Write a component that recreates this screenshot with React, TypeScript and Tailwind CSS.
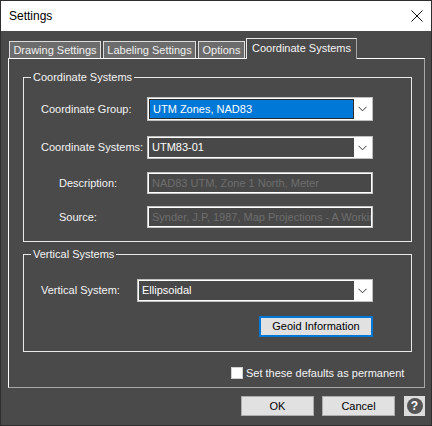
import React from "react";

const font = { fontFamily: '"Liberation Sans", Arial, sans-serif' };

function Chevron() {
  return (
    <svg width="9" height="6" viewBox="0 0 9 6" className="block">
      <path d="M0.5 0.8 L4.5 4.8 L8.5 0.8" fill="none" stroke="#333" strokeWidth="1" />
    </svg>
  );
}

function Combo({ value, selected, w, h }: { value: string; selected?: boolean; w: string; h: string }) {
  return (
    <div className={`${w} ${h} border border-[#c0c0c0] bg-white flex p-[1px]`}>
      <div
        className={`flex-1 flex items-center pl-[3px] text-[11px] text-white ${
          selected ? "bg-[#0078d7] border border-[#2a2a2a]" : "bg-[#484848]"
        }`}
      >
        {value}
      </div>
      <div className="w-[17px] flex items-center justify-center">
        <Chevron />
      </div>
    </div>
  );
}

function TextBox({ value }: { value: string }) {
  return (
    <div className="w-[226px] h-[22px] border border-[#c8c8c8] p-[1px] bg-white">
      <div className="h-full bg-[#484848] flex items-center pl-[3px] text-[11px] text-[#6e6e6e] whitespace-nowrap overflow-hidden">
        {value}
      </div>
    </div>
  );
}

function Group({ title, className, children }: { title: string; className: string; children: React.ReactNode }) {
  return (
    <div className={`relative border border-[#e8e8e8] ${className}`}>
      <span className="absolute -top-[8px] left-[7px] px-[2px] bg-[#4a4a4a] text-[11px] leading-[14px] text-[#f4f4f4]">
        {title}
      </span>
      {children}
    </div>
  );
}

export default function App() {
  return (
    <div style={font} className="w-[432px] h-[426px] bg-[#4a4a4a] border border-[#2e2e2e] flex flex-col text-[#f4f4f4] overflow-hidden">
      {/* Title bar */}
      <div className="h-[30px] bg-white flex items-center justify-between pl-[8px] pr-[8px] shrink-0">
        <span className="text-[12px] text-black">Settings</span>
        <svg width="12" height="12" viewBox="0 0 12 12">
          <path d="M0.5 0.5 L11.5 11.5 M11.5 0.5 L0.5 11.5" stroke="#111" strokeWidth="1" />
        </svg>
      </div>

      {/* Tabs */}
      <div className="flex items-end h-[20px] mt-[7px] pl-[8px] text-[11px] relative z-10">
        <div className="w-[92px] h-[17px] bg-[#6c6c6c] border border-b-0 border-[#dcdcdc] flex items-center justify-center text-[#f0f0f0]">
          Drawing Settings
        </div>
        <div className="ml-[2px] w-[93px] h-[17px] bg-[#6c6c6c] border border-b-0 border-[#dcdcdc] flex items-center justify-center text-[#f0f0f0]">
          Labeling Settings
        </div>
        <div className="ml-[2px] w-[47px] h-[17px] bg-[#6c6c6c] border border-b-0 border-[#dcdcdc] flex items-center justify-center text-[#f0f0f0]">
          Options
        </div>
        <div className="ml-[1px] w-[111px] h-[21px] -mb-[1px] bg-[#4a4a4a] border border-b-0 border-[#e8e8e8] border-r-[#a8a8a8] flex items-center justify-center text-[#f4f4f4] pb-[2px]">
          Coordinate Systems
        </div>
      </div>

      {/* Panel */}
      <div className="ml-[7px] w-[417px] h-[330px] border border-white border-r-[#a8a8a8] border-b-[#a8a8a8] text-[11px]">
        <div className="pl-[14px] pt-[18px]">
          <Group title="Coordinate Systems" className="w-[389px] h-[165px]">
            <div className="pl-[17px] pt-[19px] flex flex-col">
              <div className="flex items-center">
                <span className="w-[106px]">Coordinate Group:</span>
                <Combo value="UTM Zones, NAD83" selected w="w-[226px]" h="h-[24px]" />
              </div>
              <div className="flex items-center mt-[15px]">
                <span className="w-[106px]">Coordinate Systems:</span>
                <Combo value="UTM83-01" w="w-[226px]" h="h-[23px]" />
              </div>
              <div className="flex items-center mt-[13px]">
                <span className="w-[106px] pl-[18px]">Description:</span>
                <TextBox value="NAD83 UTM, Zone 1 North, Meter" />
              </div>
              <div className="flex items-center mt-[12px]">
                <span className="w-[106px] pl-[18px]">Source:</span>
                <TextBox value="Synder, J.P, 1987, Map Projections - A Working Manual" />
              </div>
            </div>
          </Group>

          <Group title="Vertical Systems" className="w-[389px] h-[98px] mt-[12px]">
            <div className="pl-[17px] pt-[24px] flex flex-col">
              <div className="flex items-center">
                <span className="w-[96px]">Vertical System:</span>
                <Combo value="Ellipsoidal" w="w-[236px]" h="h-[23px]" />
              </div>
              <div className="flex justify-start pl-[218px] mt-[14px]">
                <button className="w-[114px] h-[21px] bg-[#e1e1e1] border-2 border-[#0078d7] text-black text-[11px] flex items-center justify-center">
                  Geoid Information
                </button>
              </div>
            </div>
          </Group>

          <div className="flex items-center mt-[13px] pl-[208px]">
            <div className="w-[12px] h-[12px] bg-white border border-[#d0d0d0]" />
            <span className="ml-[3px]">Set these defaults as permanent</span>
          </div>
        </div>
      </div>

      {/* Buttons */}
      <div className="flex items-center mt-[8px] pl-[240px]">
        <button className="w-[73px] h-[20px] bg-[#e1e1e1] border border-[#adadad] text-black text-[11px] flex items-center justify-center">
          OK
        </button>
        <button className="ml-[8px] w-[73px] h-[20px] bg-[#e1e1e1] border border-[#adadad] text-black text-[11px] flex items-center justify-center">
          Cancel
        </button>
        <div className="ml-[9px] w-[21px] h-[20px] bg-[#dcdcdc] flex items-center justify-center">
          <div className="w-[16px] h-[16px] rounded-full bg-[#555555] flex items-center justify-center text-white font-bold text-[12px] leading-none">
            ?
          </div>
        </div>
      </div>
    </div>
  );
}
